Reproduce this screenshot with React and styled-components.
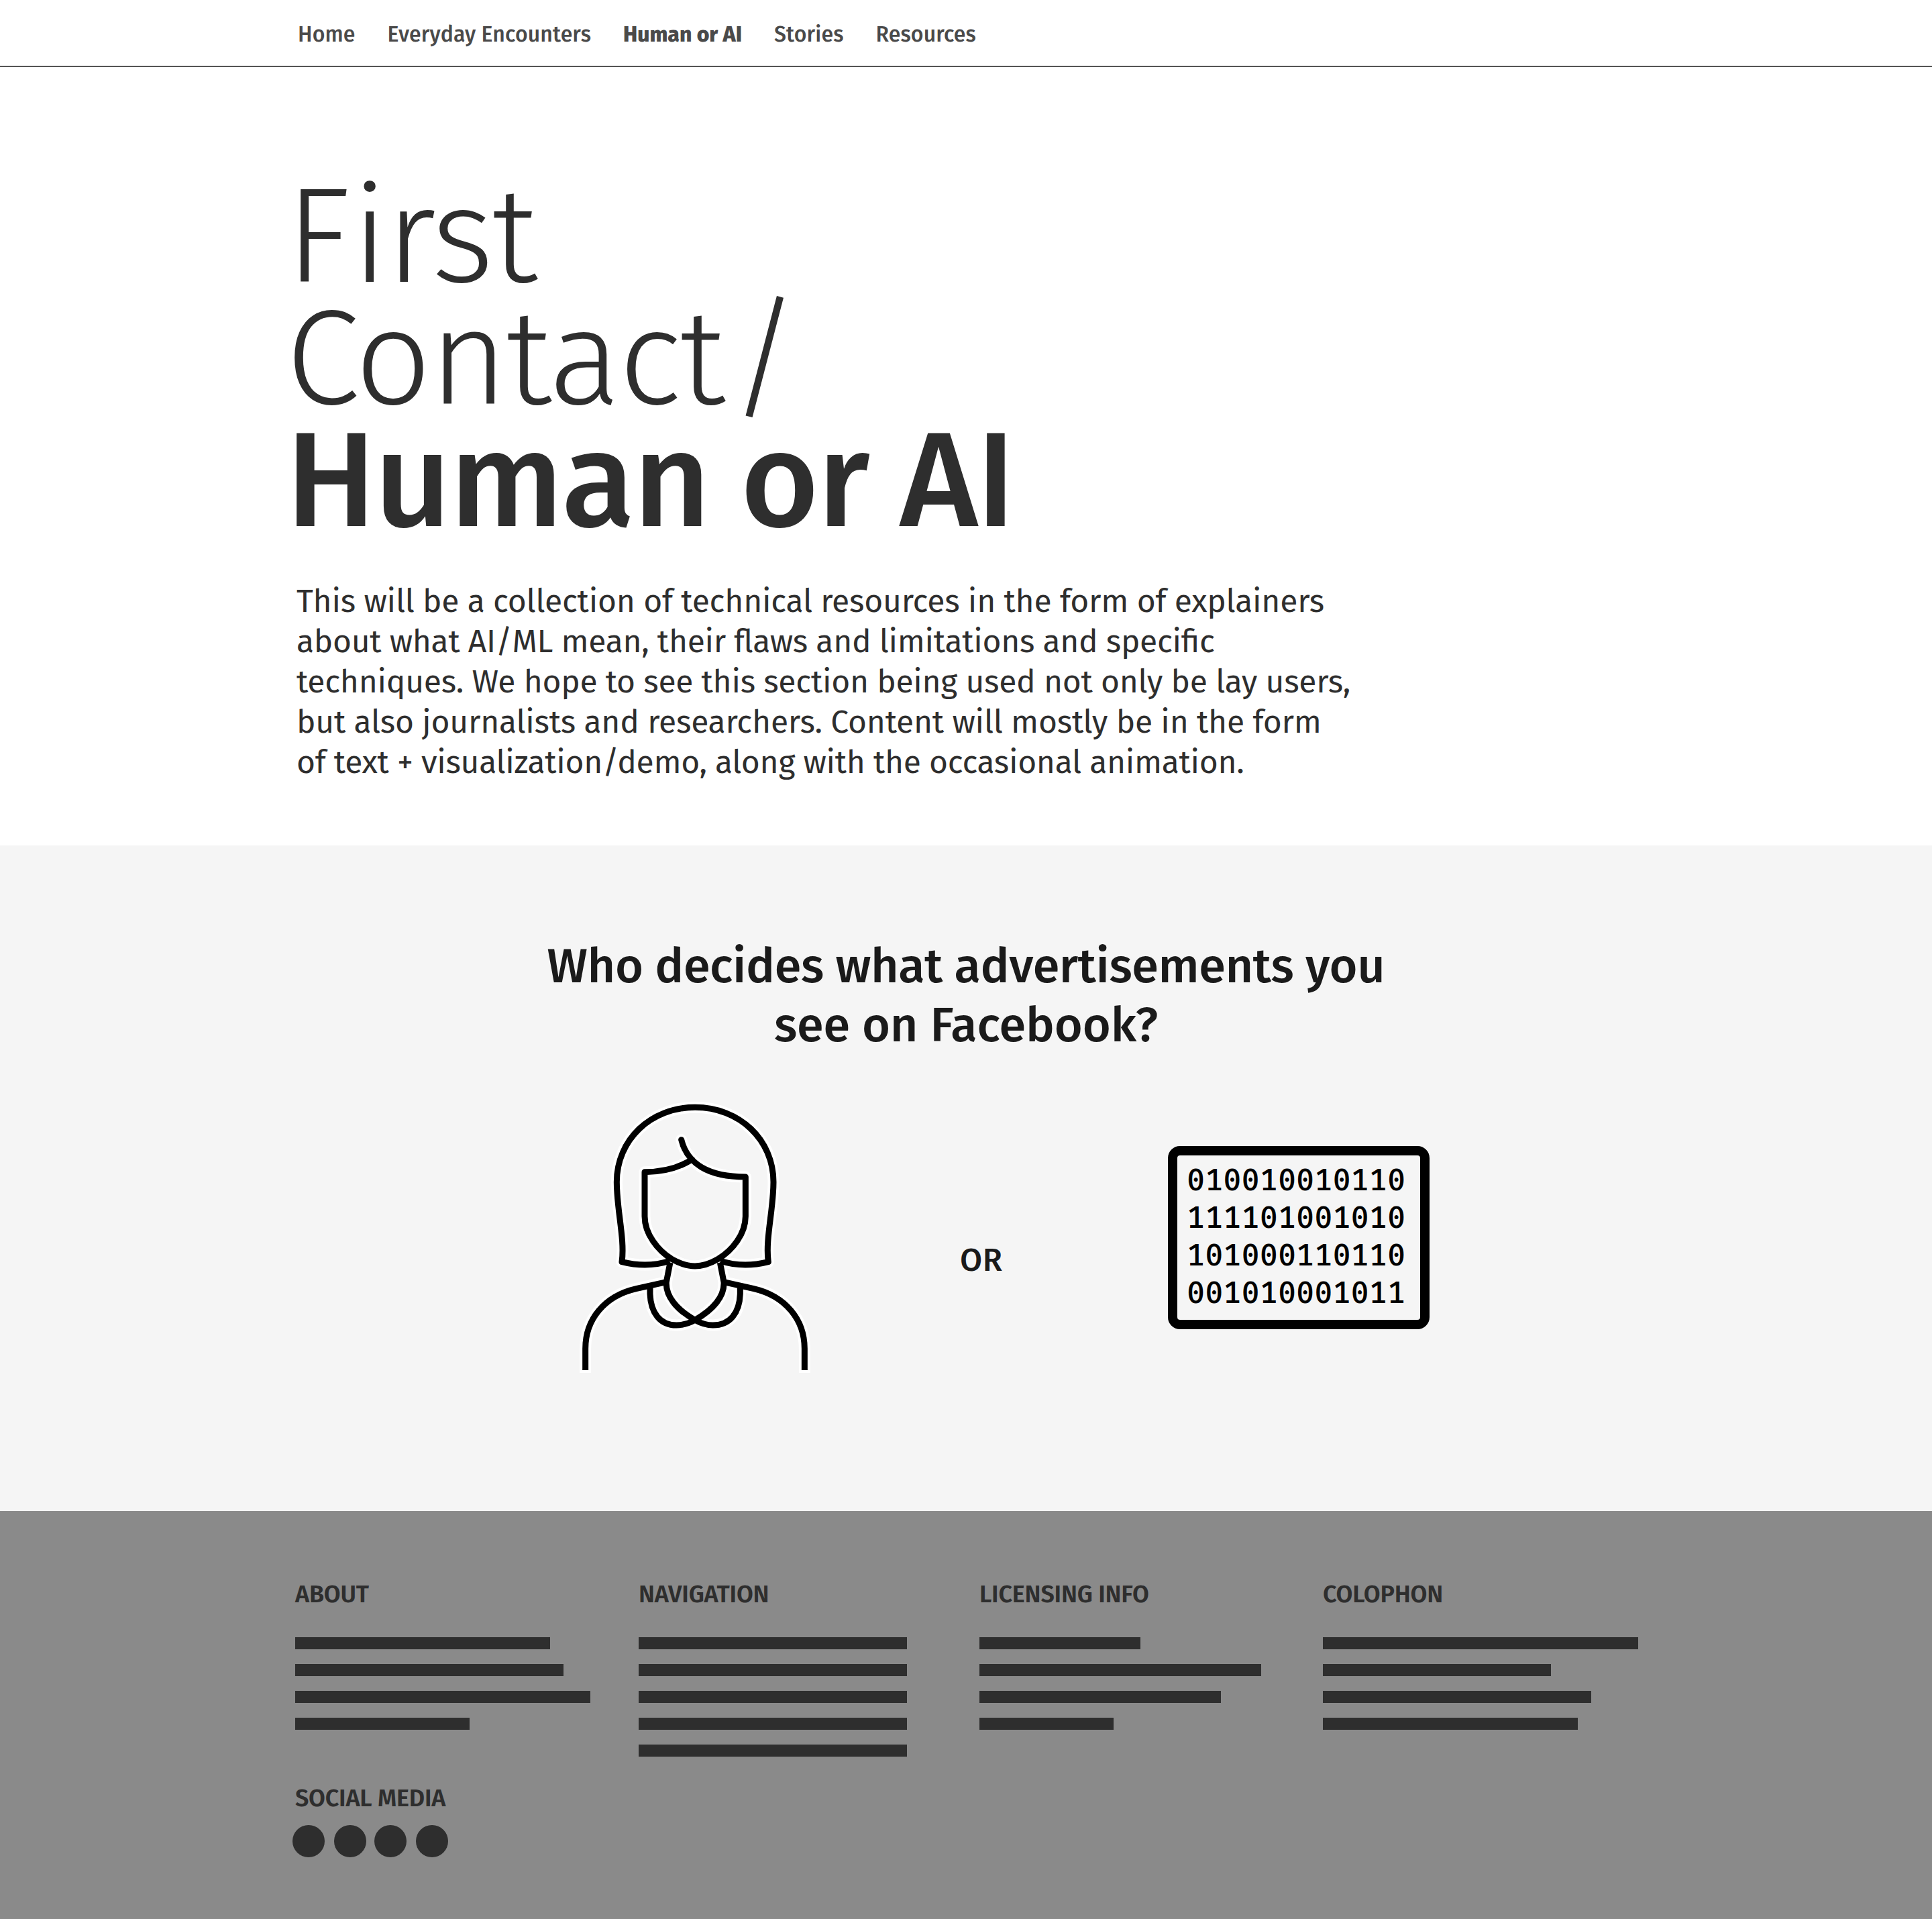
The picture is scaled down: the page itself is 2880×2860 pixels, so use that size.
import React from 'react';
import styled, { createGlobalStyle } from 'styled-components';

const SANS = '"Fira Sans", "Open Sans", "Noto Sans", sans-serif';
const MONO = '"Fira Mono", "Liberation Mono", monospace';

const GlobalStyle = createGlobalStyle`
  * { box-sizing: border-box; }
  body { margin: 0; background: #fff; }
`;

const Page = styled.div`
  width: 2880px;
  height: 2860px;
  display: flex;
  flex-direction: column;
  overflow: hidden;
  font-family: ${SANS};
  color: #2e2e2e;
`;

const Nav = styled.nav`
  height: 100px;
  flex: none;
  display: flex;
  gap: 48px;
  padding: 31px 0 0 444px;
  border-bottom: 2px solid #555;
`;

const NavLink = styled.a`
  font-size: 32px;
  line-height: 40px;
  font-weight: ${(p) => (p.$active ? 800 : 500)};
  letter-spacing: ${(p) => (p.$active ? 0 : 0.14)}px;
  color: #4a4a4a;
  white-space: nowrap;
`;

const Hero = styled.header`
  height: 1160px;
  flex: none;
  padding-top: 162px;
`;

const Title = styled.h1`
  margin: 0 0 58px 426px;
  font-size: 200px;
  line-height: 182px;
  font-weight: 300;
`;

const TitleLine = styled.span`
  display: block;
  white-space: nowrap;
  font-weight: ${(p) => (p.$strong ? 500 : 300)};
  letter-spacing: ${(p) => (p.$strong ? -2.85 : -3)}px;
`;

const Kern = styled.span`
  margin-left: ${(p) => p.$gap}px;
`;

const Intro = styled.p`
  margin: 0 0 0 442px;
  font-size: 48px;
  line-height: 60px;
  font-feature-settings: 'liga' 1;
`;

const TextLine = styled.span`
  display: block;
  white-space: nowrap;
  letter-spacing: ${(p) => p.$tracking}px;
`;

const Quiz = styled.section`
  height: 992px;
  flex: none;
  padding-top: 136px;
  background: #f5f5f5;
  color: #1a1a1a;
`;

const Question = styled.h2`
  margin: 0 0 48px;
  font-size: 72px;
  line-height: 88px;
  font-weight: 500;
  text-align: center;
`;

const Choices = styled.div`
  display: grid;
  grid-template-columns: 591px 310px 389.5px;
  padding-left: 840px;
  align-items: start;
`;

const Or = styled.span`
  margin-top: 228px;
  font-size: 48px;
  line-height: 60px;
  font-weight: 500;
  letter-spacing: 0.6px;
`;

const Machine = styled.div`
  height: 273px;
  margin-top: 88px;
  padding: 9px 0 0 14px;
  border: 14px solid #000;
  border-radius: 18px;
  font-family: ${MONO};
  font-size: 45.3px;
  line-height: 56px;
  font-weight: 500;
  color: #000;
`;

const Bits = styled.div`
  white-space: nowrap;
`;

const Footer = styled.footer`
  flex: 1;
  padding: 102px 0 0 440px;
  background: #8a8a8a;
`;

const Columns = styled.div`
  display: grid;
  grid-template-columns: 512px 508px 512px 480px;
`;

const FooterTitle = styled.h3`
  margin: 0 0 ${(p) => p.$space}px;
  font-size: 36px;
  line-height: 44px;
  font-weight: 600;
  letter-spacing: -0.22px;
  white-space: nowrap;
`;

const Bars = styled.div`
  display: flex;
  flex-direction: column;
  gap: 22px;
`;

const Bar = styled.div`
  width: ${(p) => p.$w}px;
  height: 18px;
  background: #2e2e2e;
`;

const Social = styled.div`
  margin-top: 40px;
`;

const Dots = styled.div`
  display: flex;
  margin-left: -4px;
`;

const Dot = styled.span`
  width: 48px;
  height: 48px;
  margin-right: ${(p) => p.$gap}px;
  border-radius: 50%;
  background: #2e2e2e;
`;

const navItems = ['Home', 'Everyday Encounters', 'Human or AI', 'Stories', 'Resources'];

const intro = [
  ['This will be a collection of technical resources in the form of explainers', -0.24],
  ['about what AI/ML mean, their flaws and limitations and specific', -0.32],
  ['techniques. We hope to see this section being used not only be lay users,', -0.29],
  ['but also journalists and researchers. Content will mostly be in the form', -0.24],
  ['of text + visualization/demo, along with the occasional animation.', -0.32],
];

const bits = ['010010010110', '111101001010', '101000110110', '001010001011'];

const columns = [
  ['ABOUT', [380, 400, 440, 260]],
  ['NAVIGATION', [400, 400, 400, 400, 400]],
  ['LICENSING INFO', [240, 420, 360, 200]],
  ['COLOPHON', [470, 340, 400, 380]],
];

function PersonStrokes({ end, ...rest }) {
  return (
    <g fill="none" strokeLinejoin="round" {...rest}>
      <path d="M475 778C400 802 325 798 261 782C275 680 238 550 238 425C238 236 390 91 588.500 91C787 91 939 236 939 425C939 550 902 680 916 782C852 798 777 802 702 778" />
      <path
        strokeLinecap="round"
        d="M527 236C553 342 646 402 814 402V578C814 656 756 731 690 770C645 796 615 801 588 801C561 801 531 796 485 770C421 731 363 656 363 578V380C444 380 515 362 575 324"
      />
      <path d="M477 785L460 872C456 936 506 995 588 1042C670 995 721 936 717 872L700 785" />
      <path d={`M460 872L325 902C182 935 98 1040 98 1170V${end}`} />
      <path d={`M717 872L851 902C992 935 1078 1040 1078 1170V${end}`} />
      <path d="M387 892V925C390 1010 432 1065 505 1065C540 1065 566 1054 588 1042C610 1054 636 1065 668 1065C745 1065 787 1010 790 925V892" />
    </g>
  );
}

function PersonIcon() {
  return (
    <svg width="400" height="440" viewBox="0 0 1200 1320">
      <PersonStrokes end={1278} stroke="#fff" strokeWidth={51} />
      <PersonStrokes end={1266} stroke="#000" strokeWidth={27} />
    </svg>
  );
}

export default function App() {
  return (
    <Page>
      <GlobalStyle />
      <Nav>
        {navItems.map((label) => (
          <NavLink key={label} $active={label === 'Human or AI'}>
            {label}
          </NavLink>
        ))}
      </Nav>
      <Hero>
        <Title>
          <TitleLine>
            F<Kern $gap={5}>irst</Kern>
          </TitleLine>
          <TitleLine>
            Contact<Kern $gap={9.5}>/</Kern>
          </TitleLine>
          <TitleLine $strong>Human or AI</TitleLine>
        </Title>
        <Intro>
          {intro.map(([text, tracking]) => (
            <TextLine key={text} $tracking={tracking}>
              {text}
            </TextLine>
          ))}
        </Intro>
      </Hero>
      <Quiz>
        <Question>
          <TextLine $tracking={-0.38}>Who decides what advertisements you</TextLine>
          <TextLine $tracking={-0.08}>see on Facebook?</TextLine>
        </Question>
        <Choices>
          <PersonIcon />
          <Or>OR</Or>
          <Machine>
            {bits.map((row) => (
              <Bits key={row}>{row}</Bits>
            ))}
          </Machine>
        </Choices>
      </Quiz>
      <Footer>
        <Columns>
          {columns.map(([name, widths]) => (
            <div key={name}>
              <FooterTitle $space={42}>{name}</FooterTitle>
              <Bars>
                {widths.map((w, i) => (
                  <Bar key={i} $w={w} />
                ))}
              </Bars>
            </div>
          ))}
        </Columns>
        <Social>
          <FooterTitle $space={18}>SOCIAL MEDIA</FooterTitle>
          <Dots>
            {[14, 12, 14, 0].map((gap, i) => (
              <Dot key={i} $gap={gap} />
            ))}
          </Dots>
        </Social>
      </Footer>
    </Page>
  );
}
